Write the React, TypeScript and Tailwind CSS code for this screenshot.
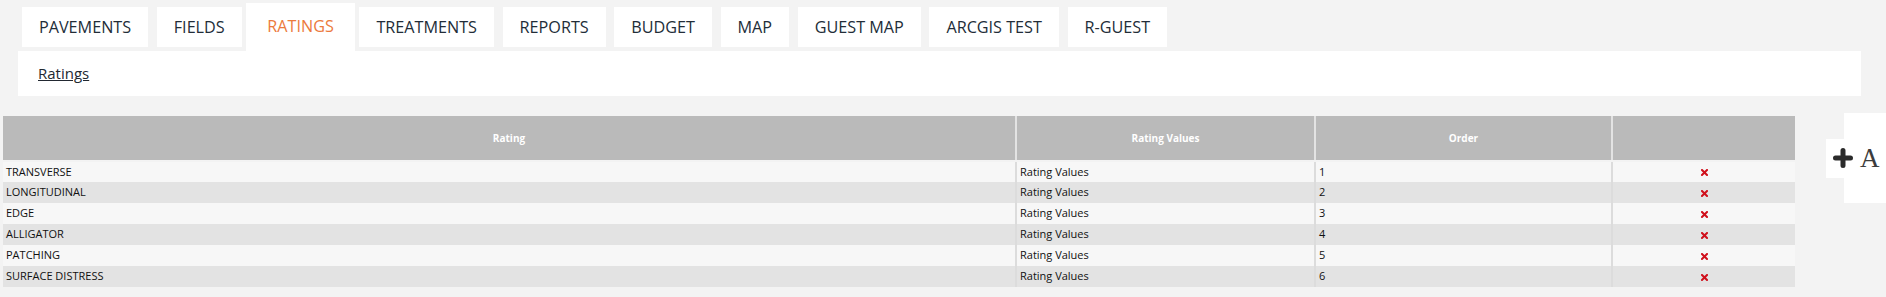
import React from "react";

const tabs = ["PAVEMENTS", "FIELDS", "RATINGS", "TREATMENTS", "REPORTS", "BUDGET", "MAP", "GUEST MAP", "ARCGIS TEST", "R-GUEST"];

const ratings = ["TRANSVERSE", "LONGITUDINAL", "EDGE", "ALLIGATOR", "PATCHING", "SURFACE DISTRESS"];

function RemoveIcon() {
  return (
    <svg width="7" height="7" viewBox="0 0 7 7" className="inline-block">
      <path d="M1 1L6 6M6 1L1 6" stroke="#d0101c" strokeWidth="2" strokeLinecap="square" />
    </svg>
  );
}

function AddWidget() {
  return (
    <div className="ml-auto flex items-center h-[90px] w-[42px] bg-white">
      <div className="-ml-[18px] h-[39px] bg-white flex items-center pl-[7px] pr-[6px] gap-[7px]">
        <svg width="20" height="20" viewBox="0 0 20 20">
          <path d="M10 2.5V17.5M2.5 10H17.5" stroke="#2b2b2b" strokeWidth="5" strokeLinecap="round" />
        </svg>
        <span className="font-['Liberation_Serif',serif] text-[27px] leading-none text-[#3c3c3c]">A</span>
      </div>
    </div>
  );
}

export default function App() {
  return (
    <div className="min-h-screen bg-[#f3f3f3] font-['Open_Sans',sans-serif]">
      <div className="flex items-end pt-[3px] pl-[22px] gap-[8.6px]">
        {tabs.map((t) =>
          t === "RATINGS" ? (
            <div key={t} className="h-[48px] -mx-[4px] px-[21px] bg-white flex items-center pb-[1px] text-[16.2px] text-[#ec7a3c]">
              {t}
            </div>
          ) : (
            <div key={t} className="h-[40px] mb-[4px] px-[17px] bg-white flex items-center text-[16.2px] text-[#222d38]">
              {t}
            </div>
          )
        )}
      </div>

      <div className="ml-[18px] mr-[25px] h-[45px] bg-white flex items-center pl-[20px]">
        <a className="text-[15px] text-[#222831] underline">Ratings</a>
      </div>

      <div className="flex items-start mt-[17px]">
        <table className="ml-[3px] mt-[3px] w-[1792px] table-fixed border-collapse text-[11px] text-[#111111]">
          <colgroup>
            <col className="w-[1013px]" />
            <col className="w-[299px]" />
            <col className="w-[297px]" />
            <col className="w-[183px]" />
          </colgroup>
          <thead>
            <tr>
              {["Rating", "Rating Values", "Order", ""].map((h, i) => (
                <th
                  key={i}
                  className={
                    "h-[45px] p-0 bg-[#bababa] text-white text-[10px] font-bold text-center border-b-2 border-b-[#f3f3f3] " +
                    (i > 0 ? "border-l-2 border-l-[#e3e3e3]" : "")
                  }
                >
                  {h}
                </th>
              ))}
            </tr>
          </thead>
          <tbody>
            {ratings.map((r, i) => {
              const bg = i % 2 === 0 ? "bg-[#f7f7f7]" : "bg-[#e3e3e3]";
              return (
                <tr key={r} className={bg}>
                  <td className="h-[21px] p-0 pl-[3px] whitespace-nowrap">{r}</td>
                  <td className="h-[21px] p-0 pl-[3px] border-l-2 border-l-[#dcdcdc]">Rating Values</td>
                  <td className="h-[21px] p-0 pl-[3px] border-l-2 border-l-[#dcdcdc]">{i + 1}</td>
                  <td className="h-[21px] p-0 text-center border-l-2 border-l-[#dcdcdc]">
                    <RemoveIcon />
                  </td>
                </tr>
              );
            })}
          </tbody>
        </table>
        <AddWidget />
      </div>
    </div>
  );
}
